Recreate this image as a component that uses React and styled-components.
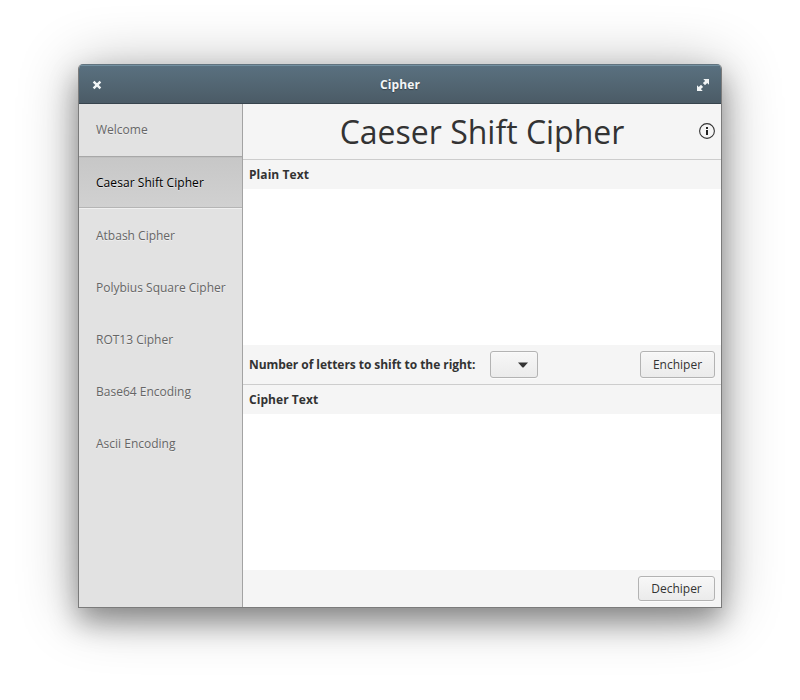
import React from "react";
import styled, { createGlobalStyle } from "styled-components";

const GlobalStyle = createGlobalStyle`
  * { box-sizing: border-box; }
  body { margin: 0; background: #fff; font-family: "Open Sans", sans-serif; font-size: 12px; color: #333; }
  button, textarea { font: inherit; color: inherit; margin: 0; }
`;

const Desktop = styled.div`
  width: 800px;
  height: 700px;
  overflow: hidden;
  padding: 64px 78px;
`;

const Window = styled.div`
  width: 644px;
  height: 544px;
  border: 1px solid #7b7b7b;
  border-top-color: #61737e;
  border-radius: 5px 5px 0 0;
  display: flex;
  flex-direction: column;
  overflow: hidden;
  background: #f5f5f5;
  box-shadow: 0 14px 28px rgba(0, 0, 0, 0.35), 0 4px 60px rgba(0, 0, 0, 0.3);
`;

const HeaderBar = styled.header`
  flex: none;
  height: 39px;
  display: grid;
  grid-template-columns: 36px 1fr 36px;
  align-items: center;
  justify-items: center;
  padding-top: 1px;
  color: #f2f5f6;
  background: linear-gradient(#5a7180, #4b5b66);
  border-bottom: 1px solid #37444d;
  box-shadow: inset 0 1px 0 #7390a0;
`;

const WindowTitle = styled.h1`
  margin: 0;
  font-size: 12px;
  font-weight: 700;
  letter-spacing: 0.15px;
  text-shadow: 0 1px 1px rgba(0, 0, 0, 0.35);
`;

const IconButton = styled.button`
  display: flex;
  padding: 0;
  border: 0;
  background: none;
  svg { display: block; }
`;

const Body = styled.div`
  flex: 1;
  min-height: 0;
  display: grid;
  grid-template-columns: 164px 1fr;
`;

const Sidebar = styled.nav`
  background: #e2e2e2;
  border-right: 1px solid #a3a3a3;
`;

const SidebarItem = styled.div`
  height: 52px;
  padding-left: 17px;
  line-height: 51px;
  color: #666;
  text-shadow: 0 1px 0 rgba(255, 255, 255, 0.45);
  ${(p) => p.$active && `
    height: 53px;
    margin-bottom: 1px;
    color: #000;
    letter-spacing: 0.06px;
    background: linear-gradient(#c7c7c7, #d1d1d1);
    border-top: 1px solid #a8a8a8;
    border-bottom: 1px solid #f0f0f0;
    box-shadow: inset 0 -1px 0 #b5b5b5, inset 0 1px 0 #c0c0c0;
  `}
`;

const Content = styled.main`
  display: flex;
  flex-direction: column;
  min-width: 0;
`;

const TitleRow = styled.div`
  height: 56px;
  display: grid;
  grid-template-columns: 16px 1fr 16px;
  align-items: center;
  padding: 0 6px;
  border-bottom: 1px solid #cdcdcd;

  ${IconButton} {
    grid-column: 3;
    margin-bottom: 1px;
  }
`;

const PageTitle = styled.h2`
  grid-column: 2;
  margin: 0;
  font-size: 32px;
  font-weight: 400;
  line-height: 55px;
  text-align: center;
`;

const FieldLabel = styled.div`
  height: 29px;
  padding-left: 6px;
  font-weight: 700;
  line-height: 29px;
  letter-spacing: 0.06px;
`;

const TextArea = styled.textarea`
  display: block;
  width: 100%;
  height: 156px;
  padding: 6px;
  border: 0;
  outline: 0;
  resize: none;
  background: #fff;
`;

const ActionRow = styled.div`
  height: ${(p) => (p.$divided ? 40 : 37)}px;
  display: flex;
  align-items: flex-start;
  padding: 6px 6px 0;
  border-bottom: ${(p) => (p.$divided ? "1px solid #cdcdcd" : "0")};
`;

const ShiftLabel = styled.span`
  width: 241px;
  font-weight: 700;
  line-height: 27px;
  letter-spacing: -0.05px;
`;

const Button = styled.button`
  width: ${(p) => p.$width}px;
  height: ${(p) => p.$height}px;
  margin-left: ${(p) => (p.$end ? "auto" : "0")};
  padding: 0;
  display: flex;
  align-items: center;
  justify-content: center;
  border: 1px solid #b3b3b3;
  border-radius: 3px;
  background: linear-gradient(#f7f7f7, #ebebeb);
  box-shadow: inset 0 1px 0 #fafafa, 0 1px 0 rgba(255, 255, 255, 0.6);
`;

const DropdownButton = styled(Button)`
  justify-content: flex-end;
  padding-right: 9px;
`;

const CloseIcon = () => (
  <svg width="10" height="10" viewBox="0 0 10 10">
    <path d="M1.6 1.6 8.4 8.4M8.4 1.6 1.6 8.4" stroke="currentColor" strokeWidth="2.4" />
  </svg>
);

const MaximizeIcon = () => (
  <svg width="12" height="12" viewBox="0 0 12 12" fill="currentColor">
    <path d="M6.3 0H12V5.7L10.2 4 8 6.2 5.9 4.1 8.1 1.9z" />
    <path d="M5.7 12H0V6.3L1.8 8 4 5.8 6.1 7.9 3.9 10.1z" />
  </svg>
);

const InfoIcon = () => (
  <svg width="16" height="16" viewBox="0 0 16 16">
    <circle cx="8" cy="8" r="7.4" fill="none" stroke="#333" strokeWidth="1.1" />
    <path d="M7 4h2v2H7zM7 7h2v5H7z" fill="#222" />
  </svg>
);

const CaretIcon = () => (
  <svg width="10" height="6" viewBox="0 0 10 6">
    <path d="M0 .5H10L5.5 5.5h-1z" fill="#333" />
  </svg>
);

const pages = [
  "Welcome",
  "Caesar Shift Cipher",
  "Atbash Cipher",
  "Polybius Square Cipher",
  "ROT13 Cipher",
  "Base64 Encoding",
  "Ascii Encoding",
];

export default function App() {
  return (
    <Desktop>
      <GlobalStyle />
      <Window>
        <HeaderBar>
          <IconButton aria-label="Close"><CloseIcon /></IconButton>
          <WindowTitle>Cipher</WindowTitle>
          <IconButton aria-label="Maximize"><MaximizeIcon /></IconButton>
        </HeaderBar>
        <Body>
          <Sidebar>
            {pages.map((page) => (
              <SidebarItem key={page} $active={page === "Caesar Shift Cipher"}>{page}</SidebarItem>
            ))}
          </Sidebar>
          <Content>
            <TitleRow>
              <PageTitle>Caeser Shift Cipher</PageTitle>
              <IconButton aria-label="About"><InfoIcon /></IconButton>
            </TitleRow>
            <FieldLabel>Plain Text</FieldLabel>
            <TextArea aria-label="Plain Text" />
            <ActionRow $divided>
              <ShiftLabel>Number of letters to shift to the right:</ShiftLabel>
              <DropdownButton $width={48} $height={27} aria-label="Shift"><CaretIcon /></DropdownButton>
              <Button $width={75} $height={27} $end>Enchiper</Button>
            </ActionRow>
            <FieldLabel>Cipher Text</FieldLabel>
            <TextArea aria-label="Cipher Text" />
            <ActionRow>
              <Button $width={77} $height={25} $end>Dechiper</Button>
            </ActionRow>
          </Content>
        </Body>
      </Window>
    </Desktop>
  );
}
